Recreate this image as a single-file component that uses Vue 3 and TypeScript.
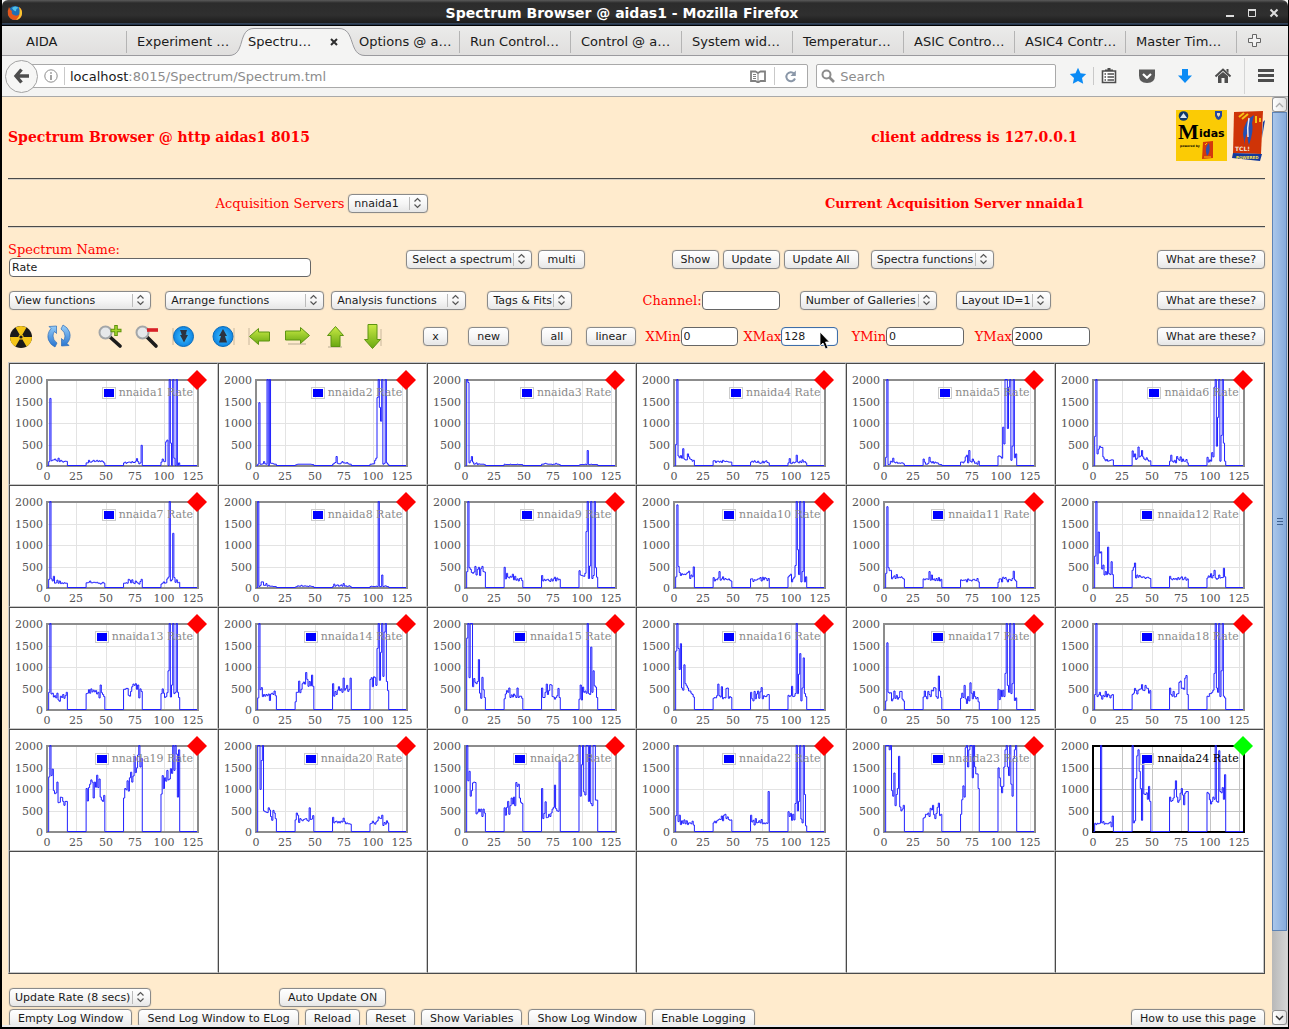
<script setup lang="ts">
import { ref } from 'vue'

interface Spectrum {
  name: string
  active: boolean
  path: string
}

const FULL_SCALE = 2000
const PLOT = { left: 37, top: 16, right: 188, bottom: 102, perChannel: 1.17 }

const tabsBefore = ['AIDA', 'Experiment …']
const tabsAfter = [
  'Options @ a…', 'Run Control…', 'Control @ a…', 'System wid…', 'Temperatur…',
  'ASIC Contro…', 'ASIC4 Contr…', 'Master Tim…',
]
const xTicks = [0, 25, 50, 75, 100, 125]
const yTicks = [0, 500, 1000, 1500, 2000]
const logButtons = [
  'Empty Log Window', 'Send Log Window to ELog', 'Reload', 'Reset',
  'Show Variables', 'Show Log Window', 'Enable Logging',
]

const spectrumName = ref('Rate')
const channel = ref('')
const xMin = ref('0')
const xMax = ref('128')
const yMin = ref('0')
const yMax = ref('2000')

// Each detector reads out four groups of sixteen channels.
const groupStarts = [1, 33, 65, 97]
const rates: string[] = [
  '90 1560 110 125 130 150 120 100 170 90 120 100 80 95 100 95|60 60 120 80 80 100 120 90 100 120 90 110 90 110 90 60|60 80 50 70 80 80 60 90 70 70 100 160 90 40 60 470|80 150 100 90 550 590 0 2000 520 0 2000 170 0 2000 0 60',
  '30 1460 30 30 40 90 40 30 2000 0 2000 50 50 40 30 30|10 20 30 30 30 30 30 30 30 30 30 30 30 30 20 20|30 50 70 210 50 40 40 60 90 60 60 50 70 40 30 30|30 30 40 40 120 170 1580 2000 1350 1030 2000 30 50 2000 60 30',
  '2000 1930 60 110 210 80 30 40 60 20 40 30 30 30 30 20|30 20 20 20 20 30 20 20 20 20 20 30 20 20 20 20|30 30 40 50 40 30 30 30 30 20 30 30 50 30 30 20|10 20 20 20 20 30 20 350 20 20 30 20 20 20 20 20',
  '490 2000 220 180 230 170 390 150 130 130 270 200 150 140 100 120|110 110 70 100 100 80 100 70 120 100 90 100 90 80 80 80|80 100 80 110 80 70 100 60 50 60 100 60 90 110 70 60|60 160 50 50 80 60 80 240 80 60 100 70 130 80 90 60',
  '190 2000 20 30 100 80 170 80 60 80 50 60 50 60 60 40|150 80 30 30 50 190 90 60 90 50 80 60 60 30 20 20|80 80 60 100 200 240 60 350 100 80 150 100 50 60 30 100|220 220 200 170 890 500 2000 2000 860 1820 2000 120 450 2000 180 270',
  '680 2000 270 380 450 420 420 200 150 110 140 100 110 120 130 130|340 200 270 140 170 430 200 220 350 200 150 130 180 130 100 110|100 240 100 80 120 60 210 150 120 200 90 150 100 100 140 60|190 80 130 100 300 200 1820 2000 450 1120 2000 100 700 2000 520 100',
  '190 2000 200 150 260 100 110 170 100 150 90 110 90 110 100 100|110 110 120 150 110 110 120 120 110 120 100 100 80 100 120 100|100 100 110 100 190 170 110 180 110 90 150 120 100 80 140 190|80 100 130 100 110 200 240 2000 150 180 1260 230 120 180 110 120',
  '2000 20 50 130 130 50 50 90 30 50 30 30 30 20 20 20|10 20 40 30 30 50 30 30 40 30 30 20 40 30 20 20|20 80 30 50 60 30 40 60 30 90 30 40 20 30 40 20|20 30 20 20 20 30 20 2000 20 20 290 20 30 40 20 20',
  '370 2000 460 420 350 330 360 490 290 420 470 280 440 490 370 360|470 200 330 240 220 260 240 310 180 260 170 200 150 210 220 160|280 150 190 160 180 190 160 140 200 150 200 240 150 220 180 190|390 290 280 270 260 330 1300 2000 210 500 2000 210 280 2000 460 240',
  '250 1920 490 350 280 320 300 310 300 330 350 380 210 290 250 480|230 150 190 180 220 370 170 200 250 180 210 190 180 200 170 150|200 200 140 180 170 180 200 200 230 150 240 180 230 210 160 210|250 280 310 130 200 240 510 2000 880 300 2000 130 370 2000 130 250',
  '330 1880 460 390 400 200 240 270 210 300 220 240 230 250 220 200|200 180 200 200 190 370 170 290 180 200 160 210 160 230 150 190|180 160 170 170 180 130 200 170 170 150 180 190 170 160 210 130|120 200 200 130 240 210 230 180 130 190 180 160 210 380 180 150',
  '730 2000 550 1290 800 830 430 520 290 370 300 940 320 300 600 300|400 470 570 220 290 240 280 250 230 250 240 210 230 240 220 210|260 200 180 210 190 210 180 230 190 220 250 180 200 240 170 200|220 270 240 320 220 280 400 220 190 210 290 220 230 230 450 250',
  '400 2000 360 380 290 320 270 380 220 190 310 280 350 260 320 400|370 380 460 380 480 410 450 410 440 360 400 270 570 390 350 300|470 470 490 490 330 310 420 530 590 560 600 470 570 270 480 420|370 480 380 280 300 390 900 2000 290 570 2000 370 400 2000 400 280',
  '270 2000 460 510 300 350 310 350 320 360 210 360 380 350 430 320|180 400 400 660 390 470 600 640 590 860 700 540 650 550 800 540|600 310 420 350 450 530 440 480 400 730 450 490 560 420 470 730|700 740 530 760 740 560 1420 2000 680 1330 2000 770 1800 2000 650 440',
  '1660 2000 740 2000 2000 530 720 630 600 650 1160 380 260 750 460 280|250 360 440 400 500 280 340 290 360 320 280 500 280 310 310 260|500 280 280 400 590 350 440 580 570 300 290 240 280 320 490 280|240 570 220 520 400 430 380 2000 370 350 1450 400 900 550 520 280',
  '1360 2000 1420 930 1530 500 450 1040 600 550 500 430 430 380 350 290|260 280 270 320 590 320 290 530 250 280 270 490 500 260 300 280|400 250 200 420 250 360 430 260 410 510 250 320 300 300 340 350|330 300 320 540 300 310 370 2000 370 820 1300 200 500 1200 370 300',
  '200 1550 400 380 390 200 250 430 260 320 240 280 420 420 240 200|290 430 300 250 420 350 300 450 430 510 500 300 260 780 430 280|260 380 280 560 250 140 300 200 620 380 250 420 300 250 280 180|470 230 450 300 450 300 840 2000 560 400 2000 370 600 2000 210 270',
  '350 2000 300 340 400 320 240 330 300 420 290 360 330 270 330 350|350 380 490 440 360 450 470 480 580 450 440 560 500 490 380 440|500 350 310 420 290 300 360 370 630 660 490 500 470 730 790 350|310 300 370 370 400 450 840 2000 500 400 2000 300 900 2000 310 270',
  '1270 2000 1300 1450 950 880 900 1150 670 680 800 790 700 610 700 700|1000 710 1020 1100 1200 1150 780 1150 1030 1310 1020 1220 800 730 700 840|780 1000 970 1180 940 1250 1380 1150 1290 1750 1370 1480 1780 2000 1500 1700|870 1300 1000 1250 1170 1420 1200 1220 1460 1350 2000 1420 2000 1800 800 1900',
  '2000 2000 980 1650 2000 480 460 450 440 550 500 350 260 490 430 300|270 430 380 210 300 270 250 280 290 300 260 240 550 280 290 370|330 200 230 240 200 230 200 240 220 310 230 180 200 180 180 170|180 190 240 200 170 220 250 340 310 300 380 140 210 170 250 200',
  '2000 1180 1400 820 950 1130 1150 1140 410 450 520 460 520 350 520 430|550 380 560 700 400 600 780 640 800 600 1140 1050 1100 780 680 650|1000 300 420 690 320 330 400 350 430 520 560 1080 530 480 470 1650|2000 820 1550 2000 920 850 2000 2000 700 2000 650 600 2000 2000 730 730',
  '370 2000 230 380 160 250 190 270 180 250 160 200 200 180 240 150|200 240 200 250 270 290 280 360 250 380 400 300 340 280 260 270|380 220 260 150 300 200 210 250 200 280 180 200 180 200 190 930|460 350 420 260 400 270 650 2000 480 700 2000 290 200 2000 860 130',
  '2000 2000 2000 1900 2000 950 820 1360 600 860 1000 1750 570 480 520 610|310 330 400 390 430 350 540 500 610 390 300 420 560 660 370 400|400 740 1060 800 1950 2000 1500 1900 2000 2000 1250 2000 1500 1340 1340 1000|1480 1250 1050 900 1050 1500 1900 2000 1500 1300 2000 1100 820 1700 1900 2000',
  '190 160 190 180 190 2000 200 230 170 190 180 180 200 220 110 360|2000 200 250 1230 1760 1900 1400 1000 260 1700 870 860 900 750 1050 700|800 700 720 780 980 1180 800 680 730 890 1000 850 620 890 930 930|910 880 740 640 700 800 750 2000 700 680 1880 930 900 1020 750 1320',
]

function tracePath(encoded: string): string {
  const values: number[] = new Array(128).fill(0)
  encoded.split('|').forEach((group, g) => {
    group.split(' ').forEach((v, i) => {
      values[groupStarts[g] + i] = Number(v)
    })
  })
  const base = PLOT.bottom - 0.5
  let d = `M${PLOT.left + 0.5} ${base}`
  let last = -1
  values.forEach((v, c) => {
    const clipped = Math.min(v, FULL_SCALE)
    if (clipped === last) return
    const y = base - (clipped / FULL_SCALE) * (PLOT.bottom - PLOT.top)
    d += `H${(PLOT.left + 0.5 + c * PLOT.perChannel).toFixed(2)}V${y.toFixed(1)}`
    last = clipped
  })
  return `${d}H${PLOT.right - 1}`
}

const spectra: Spectrum[] = rates.map((r, i) => ({
  name: `nnaida${i + 1} Rate`,
  active: i === 23,
  path: tracePath(r),
}))

const rows: (Spectrum | null)[][] = []
for (let r = 0; r < 5; r++) {
  rows.push(Array.from({ length: 6 }, (_, c) => spectra[r * 6 + c] ?? null))
}

function tickX(v: number): number {
  return Math.round(PLOT.left + v * PLOT.perChannel)
}
function tickY(v: number): number {
  return Math.round(PLOT.bottom - (v / FULL_SCALE) * (PLOT.bottom - PLOT.top))
}
</script>

<template>
  <div class="window">
    <header class="titlebar">
      <svg class="fox" width="16" height="16" viewBox="0 0 16 16">
        <circle cx="8" cy="8" r="7" fill="#1f6fb5" />
        <path d="M5 3Q8 0 12 3Q9 3 9 6Q7 7 5 3Z" fill="#4fc0e8" />
        <path d="M2 2Q0 6 1 10Q3 15 8 15Q14 15 15 9Q15.500 4 12 2Q14 6 12.500 9Q10 12 7 10Q4 9 5 6Q3 5 2 2Z" fill="#e4571b" />
        <path d="M12 2Q15.500 5 15 9Q14 14 9 15Q13 11 12.500 8Q13 5 12 2Z" fill="#f8c630" />
      </svg>
      <h1>Spectrum Browser @ aidas1 - Mozilla Firefox</h1>
      <div class="wm">
        <button aria-label="Minimize"><svg width="10" height="10"><path d="M1 8H9" stroke="#ddd" stroke-width="2" /></svg></button>
        <button aria-label="Maximize"><svg width="10" height="10"><path d="M1.500 2H8.500V8.500H1.500Z" fill="none" stroke="#ddd" /><path d="M1 2H9" stroke="#ddd" stroke-width="2" /></svg></button>
        <button aria-label="Close"><svg width="10" height="10"><path d="M1.500 1.500L8.500 8.500M8.500 1.500L1.500 8.500" stroke="#ddd" stroke-width="2" /></svg></button>
      </div>
    </header>

    <nav class="tabs">
      <a v-for="t in tabsBefore" :key="t" href="#" class="tab">{{ t }}</a>
      <a href="#" class="tab current">
        <svg class="shape" viewBox="0 0 136 29" preserveAspectRatio="none">
          <path d="M0 28.500C17 28.500 8 1.500 25 1.500H110C127 1.500 119 28.500 136 28.500V30H0Z" fill="#f4f4f3" stroke="#9a9a9e" />
        </svg>
        <span>Spectru…</span>
        <svg class="x" width="8" height="8"><path d="M1 1L7 7M7 1L1 7" stroke="#2e2e2e" stroke-width="2" /></svg>
      </a>
      <a v-for="t in tabsAfter" :key="t" href="#" class="tab">{{ t }}</a>
      <button class="newtab" aria-label="New tab">
        <svg width="13" height="13"><path d="M4.500 .5H8.500V4.500H12.500V8.500H8.500V12.500H4.500V8.500H.5V4.500H4.500Z" fill="#f2f2f2" stroke="#666" /></svg>
      </button>
    </nav>

    <div class="toolbar">
      <button class="back" aria-label="Back">
        <svg width="18" height="18"><path d="M8.500 2.500L3 9L8.500 15.500M3.500 9H16" fill="none" stroke="#4d4d4d" stroke-width="3.400" /></svg>
      </button>
      <div class="url">
        <svg width="14" height="14"><circle cx="7" cy="7" r="6.200" fill="none" stroke="#8c8c8c" /><path d="M7 6V11M7 3.200V4.800" stroke="#8c8c8c" stroke-width="1.600" /></svg>
        <i class="bar"></i>
        <p>localhost<span>:8015/Spectrum/Spectrum.tml</span></p>
        <svg width="16" height="13"><path d="M1 1.500H5.500L8 3L10.500 1.500H15V11H10.500L8 12.500L5.500 11H1Z" fill="none" stroke="#808080" stroke-width="1.800" /><path d="M8 3V12M3 4.500H6M3 6.500H6M3 8.500H6" stroke="#808080" /></svg>
        <i class="bar"></i>
        <svg width="13" height="13"><path d="M10 3.500A4.500 4.500 0 1 0 11 8.500" fill="none" stroke="#8a97a8" stroke-width="2" /><path d="M11.800 .5V6H6.500Z" fill="#8a97a8" /></svg>
      </div>
      <div class="search">
        <svg width="14" height="14"><circle cx="5.500" cy="5.500" r="4" fill="none" stroke="#8c8c8c" stroke-width="2" /><path d="M8.500 8.500L13 13" stroke="#8c8c8c" stroke-width="2.600" /></svg>
        <input type="search" placeholder="Search" aria-label="Search" />
      </div>
      <div class="tools">
        <button aria-label="Bookmark"><svg width="18" height="18"><path d="M9 .8L11.500 6.300L17.200 6.900L13 11L14.200 16.800L9 13.900L3.800 16.800L5 11L.8 6.900L6.500 6.300Z" fill="#0b8bf5" /></svg></button>
        <i class="bar"></i>
        <button aria-label="Bookmarks list"><svg width="18" height="18"><path d="M2.500 4H15.500V15.500H2.500Z" fill="#fff" stroke="#4d4d4d" stroke-width="1.600" /><path d="M5 4V2.500H7.500V1H10.500V2.500H13V4Z" fill="#4d4d4d" /><path d="M4.500 7H6M7.500 7H14M4.500 10H6M7.500 10H14M4.500 13H6M7.500 13H14" stroke="#4d4d4d" stroke-width="1.400" /></svg></button>
        <button aria-label="Pocket"><svg width="18" height="18"><path d="M1 2.500H17V8.500Q17 16 9 16Q1 16 1 8.500Z" fill="#5a5a5a" /><path d="M5 7L9 10.800L13 7" fill="none" stroke="#fff" stroke-width="2.200" /></svg></button>
        <button aria-label="Downloads"><svg width="18" height="18"><path d="M6 2H12V8.500H16L9 16L2 8.500H6Z" fill="#0b8bf5" /></svg></button>
        <button aria-label="Home"><svg width="18" height="18"><path d="M1.500 9.500L9 2.500L16.500 9.500" fill="none" stroke="#4d4d4d" stroke-width="2" /><path d="M12.500 2H14.500V6L12.500 4ZM4 9L9 5L14 9V16H10.500V11H7.500V16H4Z" fill="#4d4d4d" /></svg></button>
        <i class="bar tall"></i>
        <button aria-label="Menu"><svg width="18" height="18"><path d="M1 3.500H17M1 8.500H17M1 13.500H17" stroke="#4d4d4d" stroke-width="3" /></svg></button>
      </div>
    </div>

    <div class="viewport">
      <main class="page">
        <div class="banner">
          <h2>Spectrum Browser @ http aidas1 8015</h2>
          <h2>client address is 127.0.0.1</h2>
          <div class="logos">
            <svg width="51" height="51" viewBox="0 0 51 51">
              <rect width="51" height="51" fill="#fbcb05" />
              <circle cx="7.500" cy="6" r="4.800" fill="#0f3a6e" />
              <path d="M4 8H11L7.500 3Z" fill="#dce8f2" />
              <path d="M39 1H46V6Q45 9 42.500 10Q40 9 39 6Z" fill="#2346a0" />
              <path d="M41 3H44V5L42.500 7L41 5Z" fill="#e8d9b8" />
              <text x="2" y="29" class="midas-m">M</text>
              <text x="23" y="27" class="midas">idas</text>
              <text x="4" y="37" class="tiny">powered by</text>
              <path d="M27 32L37 31V48L26 49Z" fill="#d4380d" />
              <path d="M33 33Q28 38 31 46Q35 42 33 33Z" fill="#2c50b0" />
              <path d="M29 35L31 33M28 47H35" stroke="#fbcb05" />
            </svg>
            <svg width="33" height="51" viewBox="0 0 33 51">
              <path d="M2 2L31 1L29 44L1 43Z" fill="#cf3407" />
              <path d="M1 43L30 44L28 51L0 48ZM31 12L33 10L30 28Z" fill="#12399c" />
              <path d="M22 5Q12 10 11 24L13 36Q12 28 16 22Q15 30 17 35Q22 20 20 13Z" fill="#2450b4" />
              <path d="M17 8Q15 18 16 27" fill="none" stroke="#e9e6ee" stroke-width="1.500" />
              <path d="M7 7L12 3M10 9L16 4M24 13V6M28 12V8" stroke="#f5c116" stroke-width="2" />
              <text x="3" y="41" class="tcl">TCL!</text>
              <text x="4" y="49" class="powered">POWERED</text>
            </svg>
          </div>
        </div>
        <hr />
        <div class="servers">
          <div>
            <label for="server">Acquisition Servers</label>
            <span class="pick server"><select id="server"><option>nnaida1</option></select><svg width="9" height="12"><use href="#updown" /></svg></span>
          </div>
          <h3>Current Acquisition Server nnaida1</h3>
        </div>
        <hr />

        <form class="controls" @submit.prevent>
          <svg class="defs" width="0" height="0" aria-hidden="true">
            <defs>
              <path id="updown" d="M1.500 4.500L4.500 1.500L7.500 4.500M1.500 7.500L4.500 10.500L7.500 7.500" fill="none" stroke="#555" stroke-width="1.200" />
              <linearGradient id="green" x1="0" y1="0" x2="0" y2="1"><stop offset="0" stop-color="#c9ea45" /><stop offset="1" stop-color="#6aa811" /></linearGradient>
              <radialGradient id="blue"><stop offset="0" stop-color="#43c4ff" /><stop offset="1" stop-color="#0d84e4" /></radialGradient>
              <linearGradient id="sky" x1="0" y1="0" x2="0" y2="1"><stop offset="0" stop-color="#9ad0fa" /><stop offset="1" stop-color="#2673cf" /></linearGradient>
            </defs>
          </svg>

          <div class="row first">
            <div class="name"><label for="spectrum">Spectrum Name:</label><input id="spectrum" v-model="spectrumName" /></div>
            <span class="pick"><select aria-label="Select a spectrum"><option>Select a spectrum</option></select><svg width="9" height="12"><use href="#updown" /></svg></span>
            <button>multi</button>
            <button>Show</button>
            <button>Update</button>
            <button>Update All</button>
            <span class="pick"><select aria-label="Spectra functions"><option>Spectra functions</option></select><svg width="9" height="12"><use href="#updown" /></svg></span>
            <button>What are these?</button>
          </div>

          <div class="row second">
            <span class="pick view"><select aria-label="View functions"><option>View functions</option></select><svg width="9" height="12"><use href="#updown" /></svg></span>
            <span class="pick arrange"><select aria-label="Arrange functions"><option>Arrange functions</option></select><svg width="9" height="12"><use href="#updown" /></svg></span>
            <span class="pick analysis"><select aria-label="Analysis functions"><option>Analysis functions</option></select><svg width="9" height="12"><use href="#updown" /></svg></span>
            <span class="pick"><select aria-label="Tags and fits"><option>Tags &amp; Fits</option></select><svg width="9" height="12"><use href="#updown" /></svg></span>
            <div class="field wide"><label for="channel">Channel:</label><input id="channel" v-model="channel" /></div>
            <span class="pick"><select aria-label="Number of galleries"><option>Number of Galleries</option></select><svg width="9" height="12"><use href="#updown" /></svg></span>
            <span class="pick"><select aria-label="Layout"><option>Layout ID=1</option></select><svg width="9" height="12"><use href="#updown" /></svg></span>
            <button>What are these?</button>
          </div>

          <div class="row third">
            <button class="icon" aria-label="Radiation">
              <svg width="24" height="26" viewBox="0 0 24 26"><circle cx="12" cy="14" r="11" fill="#1a1a1a" /><path d="M12 14L6.500 4.500A11 11 0 0 0 1 14ZM12 14L23 14A11 11 0 0 0 17.500 4.500ZM12 14L6.500 23.500A11 11 0 0 0 17.500 23.500Z" fill="#f5c518" transform="rotate(60 12 14)" /><circle cx="12" cy="14" r="2.600" fill="#f5c518" /><circle cx="12" cy="14" r="1.600" fill="#1a1a1a" /></svg>
            </button>
            <button class="icon" aria-label="Refresh">
              <svg width="24" height="26" viewBox="0 0 24 26"><path d="M9.500 3L2 3.500L4 5.500Q-.5 11 1.500 17Q3.500 22 8 24L10 20Q6 17 6 13Q6 10.500 7.500 8.500L9.500 10.500ZM14.500 23L22 22.500L20 20.500Q24.500 15 22.500 9Q20.500 4 16 2L14 6Q18 9 18 13Q18 15.500 16.500 17.500L14.500 15.500Z" fill="url(#sky)" stroke="#2b6cb8" stroke-width=".7" /></svg>
            </button>
            <button class="icon" aria-label="Zoom in">
              <svg width="24" height="26" viewBox="0 0 24 26"><path d="M12 14L22 23" stroke="#1c1c1c" stroke-width="3.600" stroke-linecap="round" /><circle cx="7.500" cy="9.500" r="6" fill="#e6e8ea" stroke="#a3a6a8" stroke-width="2" /><path d="M12.500 7.500H23.500M18 2V13" stroke="#5f930e" stroke-width="3.600" /><path d="M13.500 7.500H22.500M18 3V12" stroke="#a4d62a" stroke-width="1.600" /></svg>
            </button>
            <button class="icon" aria-label="Zoom out">
              <svg width="24" height="26" viewBox="0 0 24 26"><path d="M12 14L21 23" stroke="#1c1c1c" stroke-width="3.600" stroke-linecap="round" /><circle cx="7.500" cy="9.500" r="6" fill="#e6e8ea" stroke="#a3a6a8" stroke-width="2" /><path d="M12 7H23" stroke="#d92027" stroke-width="3.600" /></svg>
            </button>
            <button class="icon" aria-label="Compress">
              <svg width="24" height="26" viewBox="0 0 24 26"><path d="M1 5V22" stroke="#c9b79c" /><circle cx="11.500" cy="13.500" r="10" fill="url(#blue)" stroke="#0b6cb8" /><path d="M8 7H15L13.500 12H16L12 19.500L8 12H10Z" fill="#2c3340" /><path d="M9.500 11H14.500" stroke="#2c3340" /></svg>
            </button>
            <button class="icon" aria-label="Expand">
              <svg width="24" height="26" viewBox="0 0 24 26"><path d="M23 5V22" stroke="#c9b79c" /><circle cx="12" cy="13.500" r="10" fill="url(#blue)" stroke="#0b6cb8" /><path d="M12 6L16 13H14L16 19.500H8L10 13H8Z" fill="#2c3340" /></svg>
            </button>
            <button class="icon" aria-label="Left">
              <svg width="24" height="26" viewBox="0 0 24 26"><path d="M1 5V22" stroke="#c9b79c" /><path d="M1.500 13.500L10.500 5.500V9H21.500V18H10.500V21.500Z" fill="url(#green)" stroke="#5d9412" /></svg>
            </button>
            <button class="icon" aria-label="Right">
              <svg width="25" height="26" viewBox="0 0 25 26"><path d="M3 21H21" stroke="#dccbb0" stroke-width="2" /><path d="M24.500 12.500L15.500 4.500V8H.5V17H15.500V20.500Z" fill="url(#green)" stroke="#5d9412" /></svg>
            </button>
            <button class="icon" aria-label="Up">
              <svg width="24" height="26" viewBox="0 0 24 26"><path d="M5 24H19" stroke="#dccbb0" stroke-width="2" /><path d="M12.500 3.500L20.500 12.500H17V23.500H8V12.500H4.500Z" fill="url(#green)" stroke="#5d9412" /></svg>
            </button>
            <button class="icon" aria-label="Down">
              <svg width="24" height="26" viewBox="0 0 24 26"><path d="M21 6V23" stroke="#c9b79c" /><path d="M12.500 25.500L20.500 16.500H17V1.500H8V16.500H4.500Z" fill="url(#green)" stroke="#5d9412" /></svg>
            </button>
            <button>x</button>
            <button>new</button>
            <button>all</button>
            <button>linear</button>
            <div class="field"><label for="xmin">XMin</label><input id="xmin" v-model="xMin" /></div>
            <div class="field">
              <label for="xmax">XMax</label><input id="xmax" v-model="xMax" class="focused" />
              <svg class="pointer" width="11" height="19"><path d="M1 1V15L4 12L6.500 18L9 17L6.500 11H10.500Z" fill="#000" stroke="#fff" stroke-width=".8" /></svg>
            </div>
            <div class="field wide"><label for="ymin">YMin</label><input id="ymin" v-model="yMin" /></div>
            <div class="field wide"><label for="ymax">YMax</label><input id="ymax" v-model="yMax" /></div>
            <button>What are these?</button>
          </div>
        </form>

        <table class="gallery">
          <tbody>
            <tr v-for="(cells, r) in rows" :key="r">
              <td v-for="(s, c) in cells" :key="c" :class="{ active: s?.active }">
                <template v-if="s">
                  <svg class="plot" width="100%" height="120">
                    <g class="grid">
                      <path v-for="v in xTicks.slice(1)" :key="v" :d="`M${tickX(v) + 0.5} 16V102`" />
                      <path v-for="v in yTicks.slice(1, 4)" :key="v" :d="`M37 ${tickY(v) + 0.5}H188`" />
                    </g>
                    <rect class="frame" x="37" y="16" width="151" height="86" />
                    <path class="trace" :d="s.path" />
                    <text v-for="v in xTicks" :key="v" :x="tickX(v)" y="116" text-anchor="middle">{{ v }}</text>
                    <text v-for="v in yTicks" :key="v" x="33" :y="tickY(v) + 4" text-anchor="end">{{ v }}</text>
                  </svg>
                  <div class="legend"><i></i><span>{{ s.name }}</span></div>
                  <svg class="marker" width="20" height="20"><path d="M10 0L20 10L10 20L0 10Z" /></svg>
                </template>
              </td>
            </tr>
          </tbody>
        </table>

        <div class="row update">
          <span class="pick rate"><select aria-label="Update rate"><option>Update Rate (8 secs)</option></select><svg width="9" height="12"><use href="#updown" /></svg></span>
          <button>Auto Update ON</button>
        </div>
        <div class="log">
          <button v-for="b in logButtons" :key="b">{{ b }}</button>
          <button class="help">How to use this page</button>
        </div>
      </main>
      <div class="scroll">
        <button aria-label="Scroll up"><svg width="9" height="6"><path d="M1 5L4.500 1.500L8 5" fill="none" stroke="#aaa" stroke-width="1.300" /></svg></button>
        <div class="thumb"><i></i><i></i><i></i></div>
        <div class="track"></div>
        <button aria-label="Scroll down"><svg width="9" height="6"><path d="M1 1L4.500 4.500L8 1" fill="none" stroke="#333" stroke-width="1.500" /></svg></button>
      </div>
    </div>
  </div>
</template>

<style>
body {
  background: #000;
}
</style>

<style scoped>
* {
  box-sizing: border-box;
}
.window {
  display: flex;
  flex-direction: column;
  height: 100vh;
  border: solid #000;
  border-width: 0 1px 2px 2px;
  font-family: 'DejaVu Sans', sans-serif;
  font-size: 13px;
  color: #1a1a1a;
  background: #f4f4f3;
}
h1,
h2,
h3,
p {
  margin: 0;
}
button {
  font: inherit;
  color: inherit;
}

.titlebar {
  flex: none;
  display: flex;
  align-items: center;
  height: 26px;
  padding: 0 9px 0 5px;
  background: linear-gradient(#5a5a5a 0, #2c2c2c 3px, #2f2f2f 15px, #1c1c1c 23px, #4a6a95 24px, #000 25px);
  border-radius: 6px 6px 0 0;
}
.titlebar h1 {
  flex: 1;
  padding-right: 4px;
  text-align: center;
  font-size: 14px;
  line-height: 26px;
  color: #fff;
}
.wm {
  display: flex;
  gap: 12px;
}
.wm button,
.tools button,
.newtab,
.back,
.icon {
  display: flex;
  padding: 0;
  border: 0;
  background: none;
}

.tabs {
  flex: none;
  display: flex;
  height: 30px;
  padding-left: 14px;
  background: linear-gradient(#ebebea, #e0dfde);
  border-bottom: 1px solid #9a9a9e;
}
.tab {
  position: relative;
  flex: 0 1 111px;
  padding-left: 10px;
  line-height: 31px;
  white-space: nowrap;
  color: #1a1a1a;
  text-decoration: none;
}
.tab::after {
  content: '';
  position: absolute;
  top: 5px;
  right: 0;
  width: 1px;
  height: 22px;
  background: #b4b4b4;
}
.tab:nth-child(2)::after,
.tab.current::after {
  display: none;
}
.tab.current span {
  position: relative;
}
.tab .shape {
  position: absolute;
  top: 1px;
  left: -9px;
  width: calc(100% + 25px);
  height: 29px;
}
.tab .x {
  position: absolute;
  top: 12px;
  right: 11px;
}
.newtab {
  align-items: center;
  padding-left: 11px;
}

.toolbar {
  flex: none;
  display: flex;
  align-items: center;
  height: 41px;
  padding: 0 13px 0 3px;
  border-bottom: 1px solid #a9a9a9;
}
.back {
  position: relative;
  z-index: 1;
  flex: none;
  align-items: center;
  justify-content: center;
  width: 33px;
  height: 33px;
  margin-right: -8px;
  border: 1px solid #a3a3a3;
  border-radius: 50%;
  background: #f6f6f5;
}
.url,
.search {
  display: flex;
  align-items: center;
  height: 24px;
  border: 1px solid #a9a9a9;
  border-radius: 2px;
  background: #fff;
}
.url {
  flex: 777;
  padding: 0 10px 0 13px;
}
.url p {
  flex: 1;
}
.url span {
  color: #8c8c8c;
}
.bar {
  width: 1px;
  height: 18px;
  background: #c9c9c9;
}
.url .bar {
  margin: 0 5px 0 6px;
}
.url p + svg {
  margin-right: 2px;
}
.url .bar + svg {
  margin-left: 4px;
}
.search {
  flex: 241;
  margin-left: 8px;
  padding-left: 4px;
}
.search input {
  flex: 1;
  min-width: 0;
  padding: 0 5px;
  border: 0;
  outline: 0;
  font: inherit;
  background: none;
}
.search input::placeholder {
  color: #8c8c8c;
  opacity: 1;
}
.tools {
  display: flex;
  align-items: center;
  gap: 20px;
  padding-left: 13px;
}
.tools .bar {
  margin: 0 -14px;
}
.tools .bar.tall {
  height: 36px;
  background: #d5d5d5;
  margin: 0 -8px;
}

.viewport {
  flex: 1;
  display: flex;
  min-height: 0;
  border-bottom: 2px solid #ededed;
}
.page {
  flex: 1;
  min-width: 0;
  overflow: hidden;
  padding: 13px 7px 0 6px;
  background: #ffebcd;
  font-family: 'DejaVu Serif', serif;
  color: #f00;
}
hr {
  height: 2px;
  margin: 0;
  border: 0;
  background: #4a4a4a;
  border-bottom: 1px solid #d8d0c4;
}
.banner {
  display: grid;
  grid-template-columns: 864fr 305fr auto;
  align-items: center;
  margin-bottom: 17px;
}
.banner h2 {
  padding-top: 2px;
  font-size: 14px;
  line-height: 20px;
}
.logos {
  display: flex;
  gap: 5px;
}
.midas-m {
  font: bold 22px 'Liberation Serif', serif;
}
.midas {
  font: bold 11px 'DejaVu Sans', sans-serif;
}
.tiny {
  font: bold 3px 'DejaVu Sans', sans-serif;
}
.tcl {
  font: bold 6px 'DejaVu Sans', sans-serif;
  fill: #f3e6dc;
}
.powered {
  font: bold 4px 'DejaVu Sans', sans-serif;
  fill: #ffe14a;
}
.servers {
  display: grid;
  grid-template-columns: 817fr 440fr;
  align-items: center;
  height: 46px;
}
.servers > div {
  display: flex;
  align-items: center;
  gap: 4px;
  padding-left: 25.400%;
}
.servers h3 {
  font-size: 13px;
}

.controls {
  padding-top: 13px;
}
.defs {
  position: absolute;
}
.row {
  display: grid;
  align-items: center;
  justify-items: start;
  padding-left: 1px;
}
.first {
  grid-template-columns: 397fr 132fr 133fr 51fr 61fr 87fr 286fr auto;
  margin-bottom: 14px;
}
.second {
  grid-template-columns: 156fr 166fr 156fr 155fr 157fr 156fr 201fr auto;
  margin-bottom: 13px;
}
.third {
  grid-template-columns: 38fr 51fr 37fr 37fr 39fr 37fr 37fr 38fr 37fr 63fr 45fr 73fr 45fr 59fr 98fr 108fr 123fr 182fr auto;
  margin-bottom: 13px;
}
.page button:not(.icon),
.page select,
.page input {
  height: 19px;
  border: 1px solid #8a8a8a;
  border-radius: 4px;
  font: 11px/15px 'DejaVu Sans', sans-serif;
  color: #1a1a1a;
}
.page button:not(.icon),
.page select {
  background: linear-gradient(#fff, #f6f6f6 50%, #e6e6e6);
  box-shadow: 0 0 1px #999;
  white-space: nowrap;
}
.page button:not(.icon) {
  padding: 0 8px;
}
.page input {
  padding: 0 2px;
  border-color: #666;
  background: #fff;
  outline: 0;
}
.pick {
  position: relative;
  display: inline-flex;
}
.pick select {
  appearance: none;
  width: 100%;
  padding: 0 19px 0 5px;
}
.pick::after {
  content: '';
  position: absolute;
  top: 3px;
  right: 18px;
  width: 1px;
  height: 13px;
  background: #bbb;
}
.pick svg {
  position: absolute;
  top: 3px;
  right: 6px;
  pointer-events: none;
}
.server {
  width: 80px;
}
.view,
.rate {
  width: 142px;
}
.arrange {
  width: 159px;
}
.analysis {
  width: 135px;
}
.name {
  display: flex;
  flex-direction: column;
}
.name label {
  line-height: 17px;
  margin-left: -1px;
}
.name input {
  width: 302px;
}
.field {
  position: relative;
  display: flex;
  align-items: center;
}
.field input {
  width: 57px;
}
.field.wide input {
  width: 78px;
}
.field .focused {
  border-color: #3f6ea8;
  box-shadow: inset 0 0 1px #6f9fd8;
}
.pointer {
  position: absolute;
  right: 8px;
  top: 4px;
}

.gallery {
  width: 100%;
  table-layout: fixed;
  border: 1px solid;
  border-color: #c8c8c8 #4a4a4a #4a4a4a #c8c8c8;
  border-spacing: 0;
  background: #fff;
}
.gallery td {
  position: relative;
  height: 122px;
  padding: 0;
  border: 1px solid;
  border-color: #4a4a4a #c8c8c8 #c8c8c8 #4a4a4a;
  vertical-align: top;
}
.plot {
  display: block;
  font-size: 11px;
  fill: #545454;
}
.grid path {
  stroke: #e3e3e3;
}
.frame {
  fill: none;
  stroke: #8c8c8c;
  stroke-width: 2;
}
.trace {
  fill: none;
  stroke: #2020ff;
}
.active .grid path {
  stroke: #c4c4c4;
}
.active .frame {
  stroke: #000;
}
.legend {
  position: absolute;
  top: 22px;
  left: 0;
  display: flex;
  align-items: center;
  justify-content: flex-end;
  gap: 3px;
  width: 183px;
  font-size: 11px;
  line-height: 14px;
  color: #8a8a8a;
}
.legend i {
  flex: none;
  width: 14px;
  height: 12px;
  border: 1px solid #ccc;
  background: #00f content-box;
  padding: 1px;
}
.active .legend {
  color: #000;
}
.marker {
  position: absolute;
  top: 6px;
  left: 177px;
  fill: #f00;
}
.active .marker {
  fill: #0f0;
}

.update {
  grid-template-columns: 270fr 986fr;
  margin: 14px 0 2px;
}
.log {
  display: flex;
  gap: 6px;
  padding-left: 1px;
}
.log .help {
  margin-left: auto;
}

.scroll {
  flex: none;
  display: flex;
  flex-direction: column;
  width: 16px;
  padding-right: 1px;
  background: #cfcfcf;
}
.scroll button {
  display: flex;
  align-items: center;
  justify-content: center;
  height: 15px;
  padding: 0;
  border: 1px solid #8f8f8f;
  border-radius: 3px;
  background: linear-gradient(90deg, #fff, #e3e3e3);
}
.thumb {
  flex: 820;
  display: flex;
  flex-direction: column;
  align-items: center;
  justify-content: center;
  gap: 2px;
  border: 1px solid #5d83b5;
  background: linear-gradient(90deg, #a9c6ea, #86abdc);
}
.thumb i {
  width: 6px;
  height: 1px;
  background: #3f618f;
}
.track {
  flex: 79;
  background: linear-gradient(90deg, #b8b8b8, #d4d4d4);
}
</style>
